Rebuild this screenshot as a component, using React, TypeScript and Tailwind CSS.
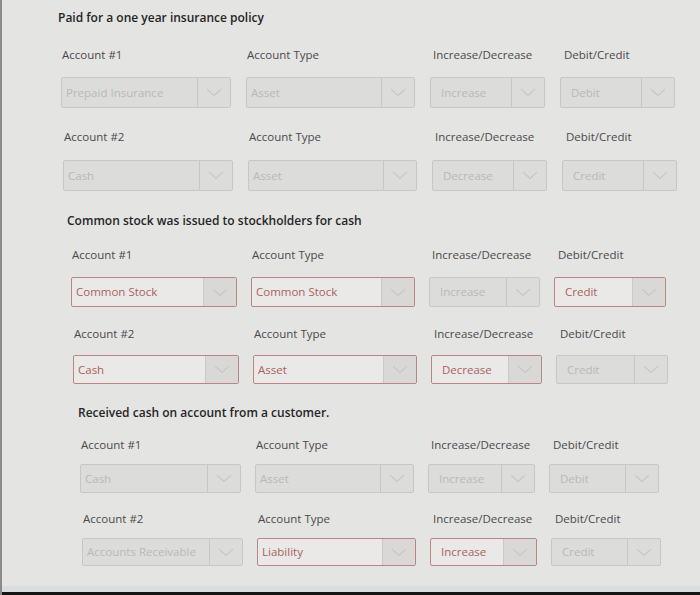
import React from 'react';

type Cell = { value: string; active?: boolean };

const Chevron = () => (
  <svg width="16" height="9" viewBox="0 0 16 9">
    <path d="M1 1.2l7 6.3 7-6.3" fill="none" stroke="#c6c6c4" strokeWidth="1.1" />
  </svg>
);

function Select({ value, active, wide }: Cell & { wide: boolean }) {
  return (
    <div
      className={`flex h-full items-stretch overflow-hidden rounded-[2px] border ${
        active ? 'border-[#b98683] bg-[#ebe9e7]' : 'border-[#c7c7c5] bg-[#dcdcda]'
      }`}
    >
      <div
        className={`flex flex-1 items-center truncate text-[11.5px] ${wide ? 'pl-[4px]' : 'pl-[10px]'} ${
          active ? 'text-[#a8625e]' : 'text-[#b9b9b7]'
        }`}
      >
        {value}
      </div>
      <div
        className={`flex w-[33px] items-center justify-center border-l ${
          active ? 'border-[#cdc8c6] bg-[#dad8d6]' : 'border-[#c7c7c5]'
        }`}
      >
        <Chevron />
      </div>
    </div>
  );
}

const labels1 = ['Account #1', 'Account Type', 'Increase/Decrease', 'Debit/Credit'];
const labels2 = ['Account #2', 'Account Type', 'Increase/Decrease', 'Debit/Credit'];

function Labels({ items, grid, className }: { items: string[]; grid: string; className: string }) {
  return (
    <div className={`grid ${grid} ${className} text-[11.5px] leading-[14px] text-[#4a4a4a]`}>
      <span className="pl-[1px]">{items[0]}</span>
      <span className="pl-[1px]">{items[1]}</span>
      <span className="pl-[3px]">{items[2]}</span>
      <span className="pl-[4px]">{items[3]}</span>
    </div>
  );
}

function Row({ cells, grid, className }: { cells: Cell[]; grid: string; className: string }) {
  return (
    <div className={`grid ${grid} ${className}`}>
      {cells.map((c, i) => (
        <Select key={i} value={c.value} active={c.active} wide={i < 2} />
      ))}
    </div>
  );
}

export default function App() {
  const g1 = 'grid-cols-[170px_169px_115px_115px] gap-x-[15px]';
  const g2 = 'grid-cols-[166px_164px_111px_112px] gap-x-[14px]';
  const g3 = 'grid-cols-[161px_159px_107px_110px] gap-x-[14px]';

  return (
    <div
      className="relative flex h-[595px] w-[700px] flex-col overflow-hidden border-l-2 border-[#8a8a88] bg-[#e4e4e2]"
      style={{ fontFamily: '"Open Sans", "Noto Sans", sans-serif' }}
    >
      <div className="flex-1">
        {/* transaction 1 */}
        <section className="pl-[59px] pt-[10px]">
          <h2 className="-ml-[3px] text-[12px] font-semibold leading-4 text-[#262626]">
            Paid for a one year insurance policy
          </h2>
          <Labels items={labels1} grid={g1} className="mt-[22px]" />
          <Row
            grid={g1}
            className="mt-[15px] h-[31px]"
            cells={[{ value: 'Prepaid Insurance' }, { value: 'Asset' }, { value: 'Increase' }, { value: 'Debit' }]}
          />
          <Labels items={labels2} grid={g1} className="ml-[2px] mt-[22px]" />
          <Row
            grid={g1}
            className="ml-[2px] mt-[16px] h-[31px]"
            cells={[{ value: 'Cash' }, { value: 'Asset' }, { value: 'Decrease' }, { value: 'Credit' }]}
          />
        </section>

        {/* transaction 2 */}
        <section className="pl-[69px] pt-[22px]">
          <h2 className="-ml-[4px] text-[12px] font-semibold leading-4 text-[#262626]">
            Common stock was issued to stockholders for cash
          </h2>
          <Labels items={labels1} grid={g2} className="mt-[19px]" />
          <Row
            grid={g2}
            className="mt-[15px] h-[30px]"
            cells={[
              { value: 'Common Stock', active: true },
              { value: 'Common Stock', active: true },
              { value: 'Increase' },
              { value: 'Credit', active: true },
            ]}
          />
          <Labels items={labels2} grid={g2} className="ml-[2px] mt-[20px]" />
          <Row
            grid={g2}
            className="ml-[2px] mt-[14px] h-[29px]"
            cells={[
              { value: 'Cash', active: true },
              { value: 'Asset', active: true },
              { value: 'Decrease', active: true },
              { value: 'Credit' },
            ]}
          />
        </section>

        {/* transaction 3 */}
        <section className="pl-[78px] pt-[21px]">
          <h2 className="-ml-[2px] text-[12px] font-semibold leading-4 text-[#262626]">
            Received cash on account from a customer.
          </h2>
          <Labels items={labels1} grid={g3} className="mt-[17px]" />
          <Row
            grid={g3}
            className="mt-[12px] h-[29px]"
            cells={[{ value: 'Cash' }, { value: 'Asset' }, { value: 'Increase' }, { value: 'Debit' }]}
          />
          <Labels items={labels2} grid={g3} className="ml-[2px] mt-[19px]" />
          <Row
            grid={g3}
            className="ml-[2px] mt-[12px] h-[28px]"
            cells={[
              { value: 'Accounts Receivable' },
              { value: 'Liability', active: true },
              { value: 'Increase', active: true },
              { value: 'Credit' },
            ]}
          />
        </section>
      </div>
      <div className="h-[6px] bg-[#d9dde0]" />
      <div className="h-[3px] bg-[#151515]" />
    </div>
  );
}
